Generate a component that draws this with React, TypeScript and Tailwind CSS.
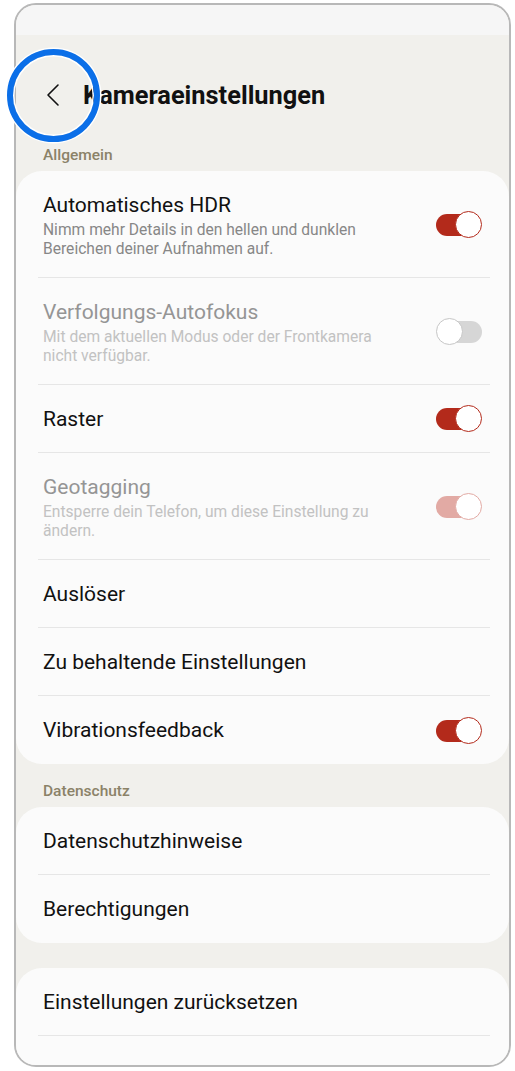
import React from "react";

type Row = {
  title: string;
  sub?: string;
  toggle?: "on" | "off" | "on-disabled";
  disabled?: boolean;
};

const general: Row[] = [
  {
    title: "Automatisches HDR",
    sub: "Nimm mehr Details in den hellen und dunklen Bereichen deiner Aufnahmen auf.",
    toggle: "on",
  },
  {
    title: "Verfolgungs-Autofokus",
    sub: "Mit dem aktuellen Modus oder der Frontkamera nicht verfügbar.",
    toggle: "off",
    disabled: true,
  },
  { title: "Raster", toggle: "on" },
  {
    title: "Geotagging",
    sub: "Entsperre dein Telefon, um diese Einstellung zu ändern.",
    toggle: "on-disabled",
    disabled: true,
  },
  { title: "Auslöser" },
  { title: "Zu behaltende Einstellungen" },
  { title: "Vibrationsfeedback", toggle: "on" },
];

const privacy: Row[] = [{ title: "Datenschutzhinweise" }, { title: "Berechtigungen" }];

function Toggle({ state }: { state: "on" | "off" | "on-disabled" }) {
  if (state === "off") {
    return (
      <div className="relative h-[27px] w-[46px] shrink-0">
        <div className="absolute left-[4px] top-[3px] h-[22px] w-[42px] rounded-full bg-[#d6d6d6]" />
        <div className="absolute left-0 top-0 h-[27px] w-[27px] rounded-full border-[1.5px] border-[#c6c6c6] bg-white" />
      </div>
    );
  }
  const track = state === "on" ? "bg-[#b32a1b]" : "bg-[#e2aaa4]";
  const ring = state === "on" ? "border-[#b32a1b]" : "border-[#e2aaa4]";
  return (
    <div className="relative h-[27px] w-[46px] shrink-0">
      <div className={`absolute left-0 top-[3px] h-[22px] w-[42px] rounded-full ${track}`} />
      <div className={`absolute right-0 top-0 h-[27px] w-[27px] rounded-full border-[1.5px] bg-white ${ring}`} />
    </div>
  );
}

function SettingRow({ row, last }: { row: Row; last?: boolean }) {
  const titleColor = row.disabled ? "text-[#959595]" : "text-[#111111]";
  const subColor = row.disabled ? "text-[#c2c2c2]" : "text-[#878787]";
  const height = row.sub ? (last ? "h-[107px]" : "h-[106px]") : last ? "h-[68px]" : "h-[67px]";
  return (
    <div>
      <div className={`flex px-[27px] ${height}`}>
        <div className={`flex-1 ${row.sub ? "pt-[21px]" : "self-center"}`}>
          <div className={`text-[21px] leading-[26px] ${titleColor}`}>{row.title}</div>
          {row.sub && (
            <div className={`mt-[3px] w-[345px] text-[15.6px] leading-[19px] ${subColor}`}>{row.sub}</div>
          )}
        </div>
        {row.toggle && (
          <div className="self-center">
            <Toggle state={row.toggle} />
          </div>
        )}
      </div>
      {!last && <div className="ml-[22px] mr-[19px] h-px bg-[#e6e6e6]" />}
    </div>
  );
}

function SectionLabel({ children }: { children: React.ReactNode }) {
  return (
    <div className="h-[20px] pl-[27px] text-[15.5px] font-medium leading-[20px] text-[#8b8268]">{children}</div>
  );
}

export default function App() {
  return (
    <div className="relative min-h-screen bg-white" style={{ fontFamily: "Roboto, 'Noto Sans', sans-serif" }}>
      <div className="ml-[14px] w-[497px] pt-[3px]">
        <div className="h-[1064px] overflow-hidden rounded-[22px] border-2 border-[#b8b8b8] bg-[#f1f0ec]">
          {/* status bar */}
          <div className="h-[30px] bg-[#f6f6f6]" />

          {/* title */}
          <div className="mt-[45px] flex h-[30px] items-center pl-[27px]">
            <svg width="16" height="24" viewBox="0 0 16 24" className="ml-[2px]" fill="none">
              <path d="M13 2 L3 12 L13 22" stroke="#111" strokeWidth="1.6" strokeLinecap="round" strokeLinejoin="round" />
            </svg>
            <div className="ml-[22px] text-[25.4px] font-bold leading-[30px] text-[#111111]">Kameraeinstellungen</div>
          </div>

          <div className="mt-[35px]">
            <SectionLabel>Allgemein</SectionLabel>
          </div>
          <div className="mt-[6px] rounded-[26px] bg-[#fbfbfb]">
            {general.map((r, i) => (
              <SettingRow key={r.title} row={r} last={i === general.length - 1} />
            ))}
          </div>

          <div className="mt-[17px]">
            <SectionLabel>Datenschutz</SectionLabel>
          </div>
          <div className="mt-[6px] rounded-[26px] bg-[#fbfbfb]">
            {privacy.map((r, i) => (
              <SettingRow key={r.title} row={r} last={i === privacy.length - 1} />
            ))}
          </div>

          <div className="mt-[25px] h-[200px] rounded-[26px] bg-[#fbfbfb]">
            <SettingRow row={{ title: "Einstellungen zurücksetzen" }} />
          </div>
        </div>
      </div>

      {/* highlight ring around back button */}
      <div className="absolute left-[7px] top-[49px] h-[93px] w-[93px] rounded-full border-[6px] border-[#0b6fe8] shadow-[0_0_0_1.5px_#ffffff,inset_0_0_0_1.5px_#ffffff]" />
    </div>
  );
}
